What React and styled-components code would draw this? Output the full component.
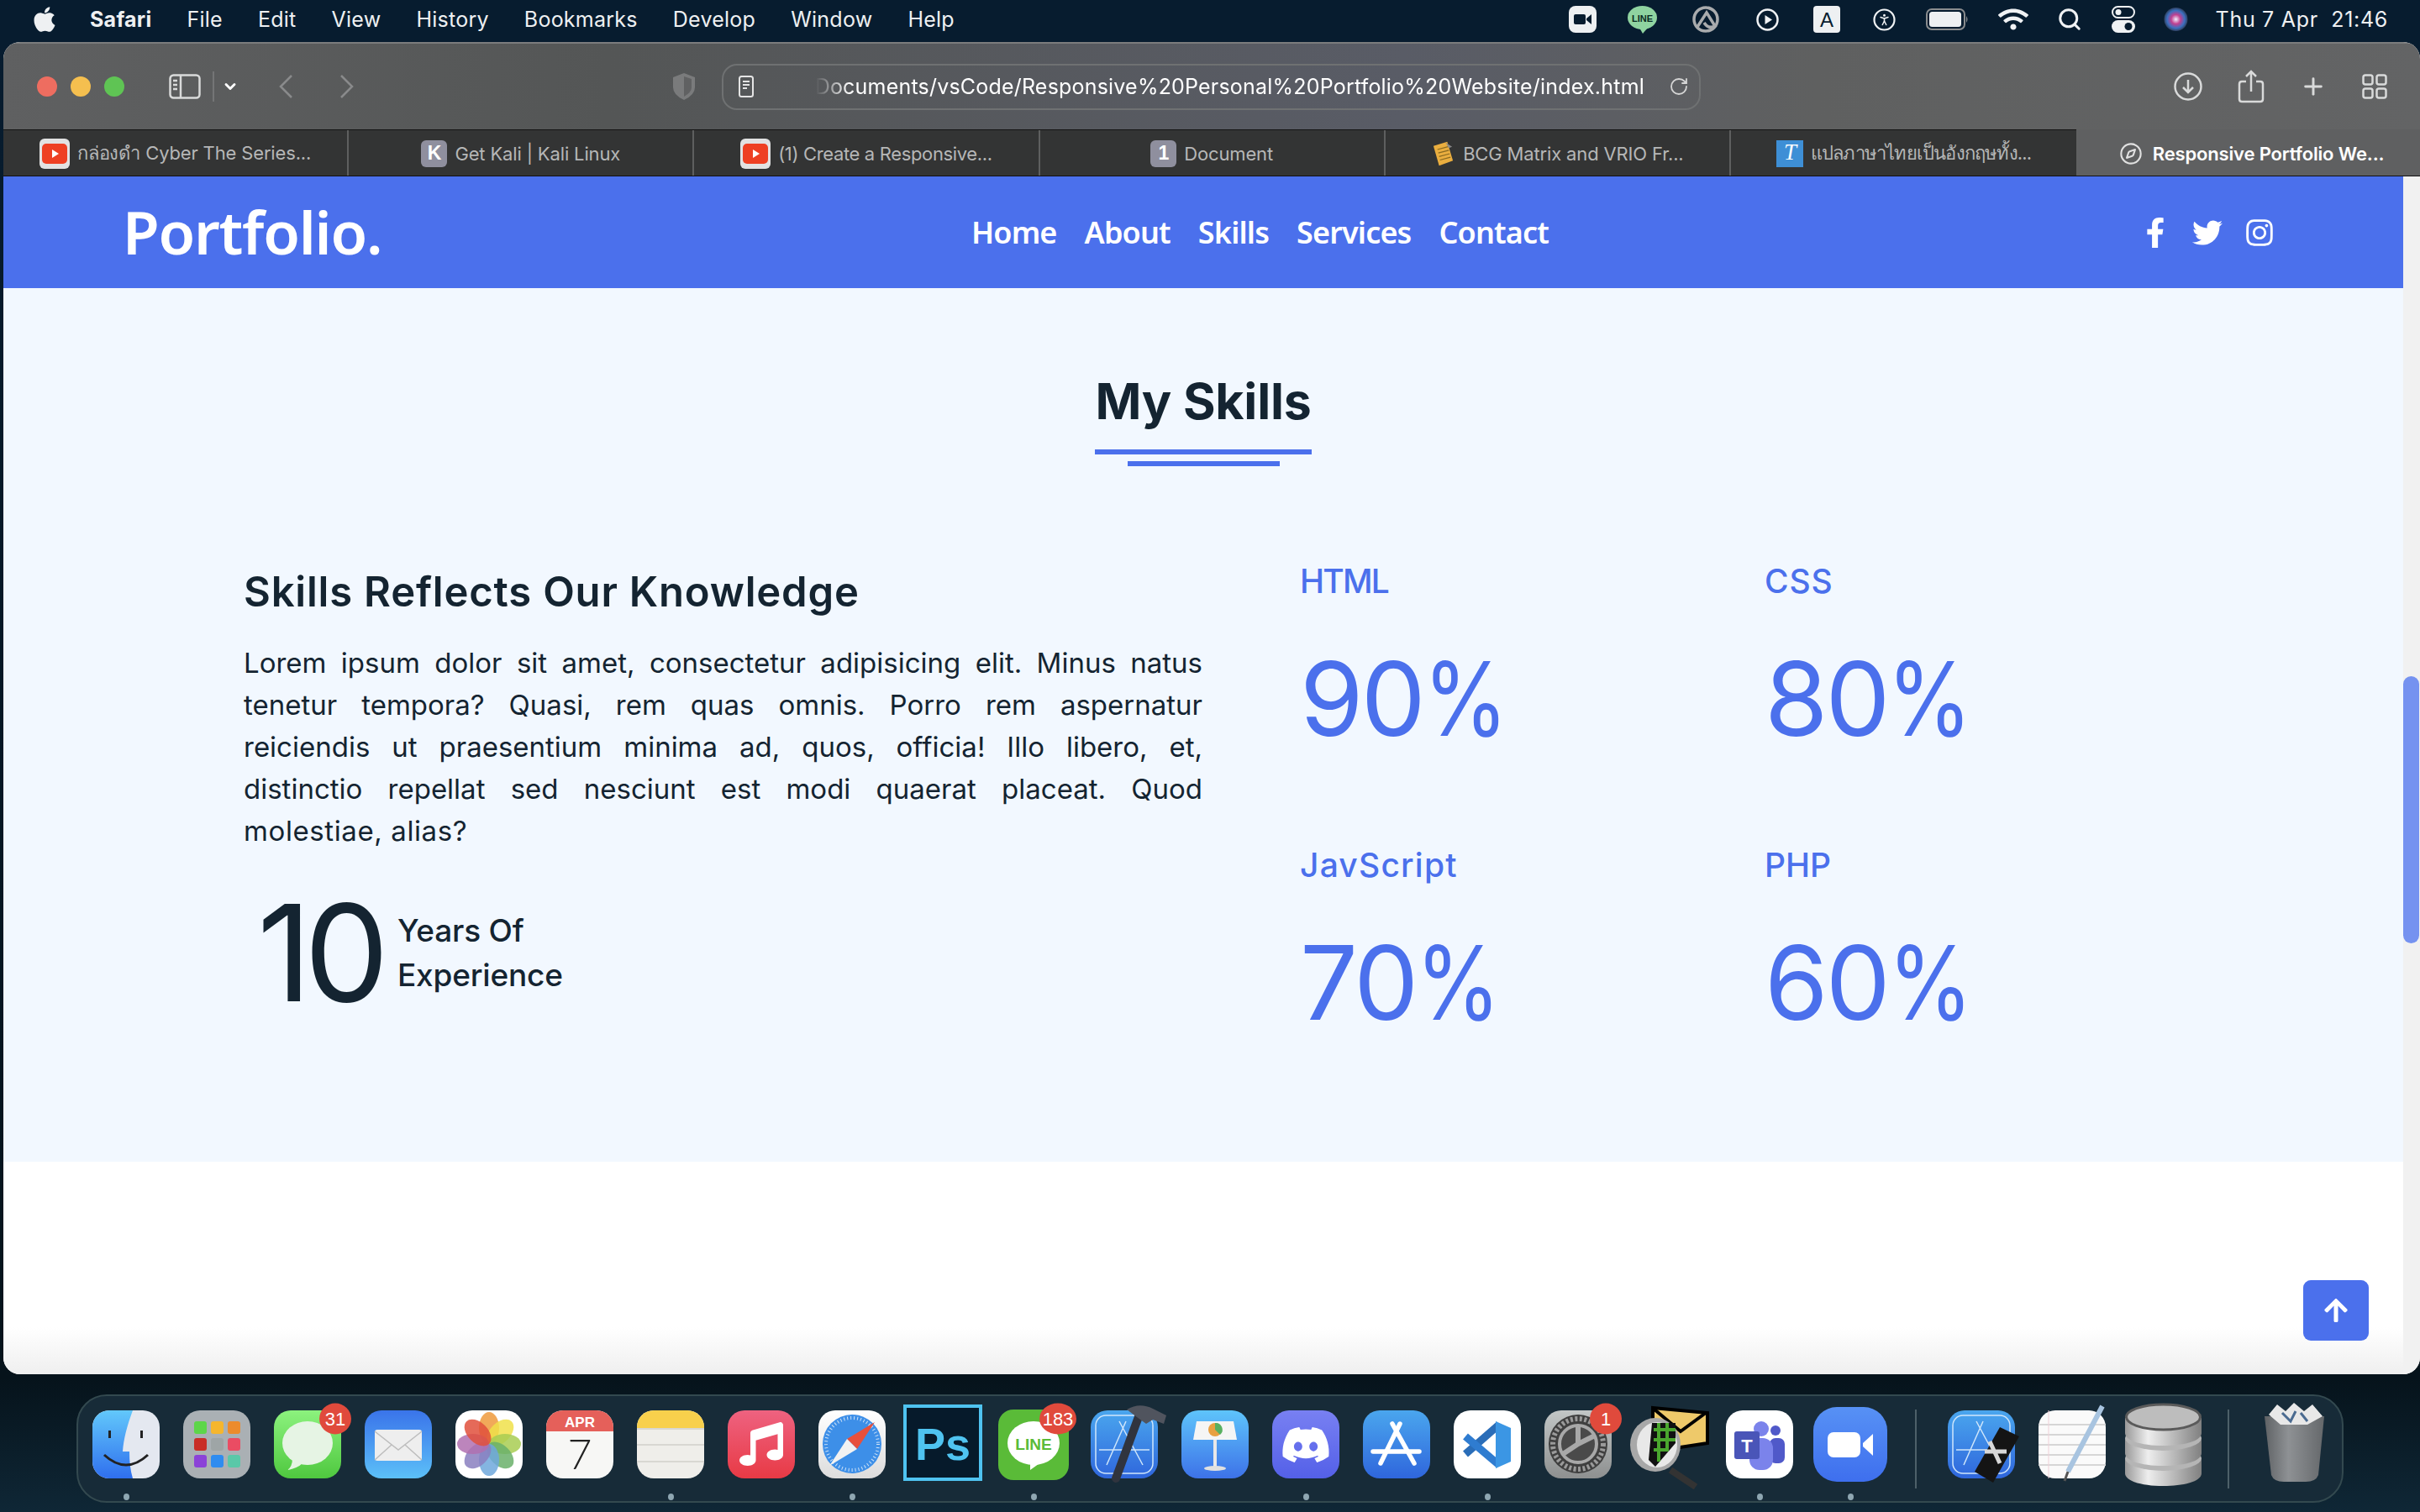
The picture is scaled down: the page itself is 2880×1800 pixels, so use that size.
import React from "react";
import styled, { createGlobalStyle } from "styled-components";
import { FaApple, FaFacebookF, FaTwitter, FaInstagram, FaWifi, FaMusic, FaDiscord, FaArrowUp } from "react-icons/fa";
import { Search, PersonStanding, RotateCw, ChevronDown, Plus, Compass } from "lucide-react";

const Global = createGlobalStyle`
  html, body { margin: 0; padding: 0; }
  body { width: 2880px; height: 1800px; overflow: hidden; background: #0c2230; font-family: "Inter", "Liberation Sans", sans-serif; }
`;

const BLUE = "#4b70ec";
const INK = "#142431";
const SANS = `"Inter", "Liberation Sans", sans-serif`;
const UI = `"Inter", "Liberation Sans", "Noto Sans", "DejaVu Sans", sans-serif`;
const UB = `"Noto Sans", "Open Sans", sans-serif`;

const Desktop = styled.div`
  width: 2880px; height: 1800px; display: flex; flex-direction: column;
  background: linear-gradient(180deg, #071c2f 0, #071c2f 50px, #06131b 1640px, #0f2736 1800px);
`;
const MenuBar = styled.div`
  height: 50px; display: flex; align-items: center; justify-content: space-between;
  padding: 0 38px 4px 36px; color: #eef0f2; font: 400 25px ${UI}; box-sizing: border-box;
`;
const MenuLeft = styled.div`display: flex; align-items: center; gap: 42px;`;
const Apple = styled(FaApple)`margin-right: -5px;`;
const MenuItem = styled.span`font-weight: ${p => (p.$bold ? 700 : 400)}; letter-spacing: 0.25px;`;
const StatusRow = styled.div`display: flex; align-items: center;`;
const Slot = styled.span`width: ${p => p.$w}px; display: flex; justify-content: center; align-items: center; color: #f0f2f4;`;
const Clock = styled.span`margin-left: 17px; white-space: pre; letter-spacing: 0.7px;`;

const Win = styled.div`
  position: relative; margin-left: 4px; height: 1586px; border-radius: 20px; overflow: hidden;
  display: flex; flex-direction: column; background: #fff;
`;
const Toolbar = styled.div`
  height: 104px; flex: none; display: flex; align-items: center; box-sizing: border-box;
  border-top: 2px solid #7b7c7d; position: relative;
  background: linear-gradient(90deg, #5f6061 0%, #545656 25%, #595c66 58%, #5f6060 75%, #636465 100%);
`;
const Lights = styled.div`display: flex; gap: 16px; margin-left: 40px;`;
const Light = styled.span`width: 24px; height: 24px; border-radius: 50%; background: ${p => p.$c};`;
const Tool = styled.span`
  display: flex; align-items: center; justify-content: center; margin-left: ${p => p.$ml}px;
  color: ${p => p.$c || "#d9dada"};
`;
const Address = styled.div`
  margin-left: ${p => p.$ml}px; width: 1165px; height: 55px; box-sizing: border-box; border: 2px solid #6f7172; border-radius: 18px;
  display: flex; align-items: center; padding: 0 12px 0 18px; color: #fff;
`;
const Url = styled.div`
  width: 986px; margin-left: 74px; font: 400 25px ${UI}; white-space: nowrap; overflow: hidden; direction: rtl; letter-spacing: 0.2px;
  -webkit-mask-image: linear-gradient(90deg, transparent 0, #000 40px);
  mask-image: linear-gradient(90deg, transparent 0, #000 40px);
`;
const TabBar = styled.div`
  height: 57px; flex: none; display: flex; background: #333434; border-top: 2px solid #141414;
  border-bottom: 1px solid #111; box-sizing: border-box; margin-top: -1px;
`;
const Tab = styled.div`
  width: 411.2px; flex: none; display: flex; align-items: center; justify-content: center; gap: 9px; box-sizing: border-box;
  border-right: 2px solid #5e5f5f; color: #b6b7b7; font: 400 22px ${UI}; white-space: nowrap; letter-spacing: ${p => p.$ls ?? -0.15}px;
  padding-top: 1px;
  &:nth-child(6) { border-right: 0; }
`;
const ActiveTab = styled(Tab)`
  flex: 1; background: #5f6061; color: #fff; font-weight: 600; border-right: 0; margin-top: -3px; padding-top: 4px; gap: 12px; padding-left: 8px;
`;
const Fav = styled.span`
  width: 31px; height: 32px; border-radius: 6px; background: ${p => p.$bg}; color: #fff; font: 700 23px "Liberation Sans", sans-serif;
  display: flex; align-items: center; justify-content: center; flex: none;
`;
const Page = styled.div`flex: 1; display: flex; min-height: 0;`;
const Main = styled.div`flex: 1; display: flex; flex-direction: column; min-width: 0;`;
const Nav = styled.nav`
  height: 133px; flex: none; background: ${BLUE}; display: flex; align-items: center; justify-content: space-between;
  padding: 0 153px 2px 142px; box-sizing: border-box; color: #fff;
`;
const Logo = styled.a`font: 600 71px ${UB}; letter-spacing: -1.25px; width: 303px; white-space: nowrap;`;
const NavLinks = styled.div`display: flex; gap: 33px; margin-left: 3px; padding-top: 2px;`;
const NavLink = styled.a`font: 600 36px ${UB}; letter-spacing: -0.85px;`;
const Social = styled.div`display: flex; align-items: center; gap: 26px; font-size: 36px; padding-top: 2px;`;
const Skills = styled.section`
  flex: none; background: #f2f8ff; display: flex; flex-direction: column; align-items: center; padding: 105px 0 152px; color: ${INK};
`;
const Title = styled.h2`
  margin: 0; width: 258px; text-align: center; font: 700 59px/1 ${SANS}; white-space: nowrap; letter-spacing: -0.2px;
`;
const Rule = styled.span`display: block; height: 6px; background: ${BLUE}; width: ${p => p.$w}px; margin-top: ${p => p.$mt}px;`;
const Columns = styled.div`
  width: 100%; box-sizing: border-box; margin-top: 117px; padding-left: 286px; display: grid; grid-template-columns: 1141px 1fr; column-gap: 116px;
`;
const Left = styled.div`padding-top: 8px;`;
const Sub = styled.h3`margin: 0; font: 600 49px/1 ${SANS}; letter-spacing: 0.8px; white-space: nowrap;`;
const Para = styled.p`margin: 35px 0 0; font: 400 33px/50px ${SANS}; color: ${INK};`;
const PLine = styled.span`
  display: block; text-align: justify; text-align-last: ${p => (p.$last ? "left" : "justify")};
  letter-spacing: ${p => (p.$last ? "0.6px" : "0")};
`;
const Exp = styled.div`display: flex; align-items: center; margin: 40px 0 0 16px;`;
const Ten = styled.span`font: 400 160px/1 ${SANS}; letter-spacing: -9px; width: 167px;`;
const ExpText = styled.span`font: 500 37px/53px ${SANS}; letter-spacing: -0.2px;`;
const Stats = styled.div`display: grid; grid-template-columns: 553px 553px; row-gap: 117px; color: ${BLUE};`;
const Stat = styled.div`display: flex; flex-direction: column; align-items: flex-start;`;
const StatName = styled.span`font: 500 39px/1 ${SANS}; letter-spacing: ${p => p.$ls}px;`;
const StatVal = styled.span`font: 400 122px/1 ${SANS}; margin-top: 60px; letter-spacing: -3px; white-space: nowrap;`;
const Pct = styled.span`display: inline-block; transform: scaleX(0.84); transform-origin: left center;`;
const Rest = styled.div`flex: 1; background: linear-gradient(180deg, #fff 0, #fff calc(100% - 56px), #efefef 100%);`;
const Scroll = styled.div`
  width: 20px; flex: none; background: #f1f1f1; padding-top: 595px; box-sizing: border-box;
`;
const Thumb = styled.div`width: 19px; height: 318px; border-radius: 10px; background: #7592f0;`;
const UpBtn = styled.a`
  position: absolute; right: 61px; bottom: 40px; width: 78px; height: 72px; border-radius: 9px; background: ${BLUE}; color: #fff;
  display: flex; align-items: center; justify-content: center; font-size: 32px;
`;
const Dock = styled.div`
  margin: 24px 0 0 91px; width: 2698px; height: 129px; box-sizing: border-box; border: 2px solid #33494f; border-radius: 36px;
  background: #172b38; display: flex; padding: 6px 0 0 3px;
`;
const Cell = styled.div`width: 108px; flex: none; display: flex; flex-direction: column; align-items: center;`;
const DockSvg = styled.svg`width: 108px; height: 104px; flex: none; overflow: visible; display: block;`;
const Dot = styled.span`width: 7px; height: 8px; margin-top: 6px; border-radius: 50%; background: ${p => (p.$on ? "#8fa7b2" : "transparent")};`;
const Sep = styled.div`width: 48px; flex: none; display: flex; justify-content: center; padding-top: 10px; &::after { content: ""; width: 2px; height: 94px; background: #4d6069; }`;

const Sq = ({ fill }) => <rect x="14" y="11" width="80" height="81" rx="20" fill={fill} />;
const Grad = ({ id, a, b }) => (
  <defs><linearGradient id={id} x1="0" y1="0" x2="0" y2="1"><stop offset="0" stopColor={a} /><stop offset="1" stopColor={b} /></linearGradient></defs>
);
const Badge = ({ x, rx, t }) => (
  <g>
    <ellipse cx={x} cy="21" rx={rx} ry="18.5" fill="#e04a3c" />
    <text x={x} y="29" textAnchor="middle" fill="#fff" fontFamily="Liberation Sans, sans-serif" fontSize="22">{t}</text>
  </g>
);
const AppGlyph = () => (
  <g fill="none" stroke="#fff" strokeWidth="5.5" strokeLinecap="round">
    <path d="M58 27 L35 74" /><path d="M49 27 L75 74" /><path d="M26 60 H81" />
  </g>
);

const icons = {
  finder: (
    <>
      <Grad id="fd" a="#62c8fb" b="#2f6fee" />
      <Sq fill="#e4e8f0" />
      <path d="M34 11 H62 C55 30 51 45 50 60 H58 C58 72 59 82 62 92 H34 A20 20 0 0 1 14 72 V31 A20 20 0 0 1 34 11Z" fill="url(#fd)" />
      <rect x="33" y="35" width="3" height="9" fill="#222" /><rect x="71" y="35" width="3" height="9" fill="#222" />
      <path d="M28 64 Q54 88 80 64" stroke="#222" strokeWidth="3" fill="none" />
    </>
  ),
  launch: (
    <>
      <Sq fill="#aab0b4" />
      {["#5dd649", "#f5b62e", "#ec8b2c", "#c92d26", "#9ea5a6", "#ea4c63", "#8b42d8", "#2f8cf0", "#5ac8a8"].map((c, i) => (
        <rect key={c} x={27 + (i % 3) * 20} y={24 + Math.floor(i / 3) * 20} width="15" height="15" rx="3" fill={c} />
      ))}
    </>
  ),
  msg: (
    <>
      <Grad id="mg" a="#8cf27e" b="#4fc83f" />
      <Sq fill="url(#mg)" />
      <ellipse cx="54" cy="50" rx="30" ry="26" fill="#e6f4e4" />
      <path d="M36 68 Q36 78 30 82 Q42 80 48 74Z" fill="#e6f4e4" />
      <Badge x={87} rx={19} t="31" />
    </>
  ),
  mail: (
    <>
      <Grad id="ml" a="#3a74ea" b="#5cc0f8" />
      <Sq fill="url(#ml)" />
      <rect x="26" y="34" width="56" height="37" rx="3" fill="#eeeeee" />
      <path d="M26 36 L54 58 L82 36 M26 70 L46 52 M82 70 L62 52" stroke="#bdbdbd" strokeWidth="1.5" fill="none" />
    </>
  ),
  photos: (
    <>
      <Sq fill="#fff" />
      {["#ef9a3c", "#f0e04a", "#a8cc52", "#6ab06a", "#6fa8dc", "#8a7fc0", "#b070b0", "#e0503c"].map((c, i) => (
        <ellipse key={c} cx="54" cy="32" rx="12" ry="19" fill={c} opacity="0.85" transform={`rotate(${i * 45} 54 51)`} />
      ))}
    </>
  ),
  cal: (
    <>
      <Sq fill="#f7f7f5" />
      <path d="M34 11 H74 A20 20 0 0 1 94 31 V36 H14 V31 A20 20 0 0 1 34 11Z" fill="#e5605a" />
      <text x="54" y="31" textAnchor="middle" fill="#fff" fontFamily="Liberation Sans, sans-serif" fontWeight="700" fontSize="17">APR</text>
      <text x="54" y="81" textAnchor="middle" fill="#222" fontFamily="Lato, sans-serif" fontWeight="300" fontSize="50">7</text>
    </>
  ),
  notes: (
    <>
      <Sq fill="#efeeea" />
      <path d="M34 11 H74 A20 20 0 0 1 94 31 V32 H14 V31 A20 20 0 0 1 34 11Z" fill="#f8d04c" />
      <path d="M14 33 H94 M14 52 H94 M14 72 H94" stroke="#d8d7d2" strokeWidth="2" />
    </>
  ),
  music: (
    <>
      <Grad id="mu" a="#ee6280" b="#e83a45" />
      <Sq fill="url(#mu)" />
      <FaMusic x="28" y="25" size="52" color="#fff" />
    </>
  ),
  safari: (
    <>
      <Grad id="sf" a="#fff" b="#dcdcdc" />
      <Sq fill="url(#sf)" />
      <circle cx="54" cy="51" r="35" fill="#3d8fe8" />
      <circle cx="54" cy="51" r="31" fill="none" stroke="#cfe3f7" strokeWidth="4" strokeDasharray="1 3" />
      <path d="M81 25 L60 57 L48 45Z" fill="#e8503c" />
      <path d="M27 77 L48 45 L60 57Z" fill="#f2f2f2" />
    </>
  ),
  ps: (
    <>
      <rect x="9" y="6" width="90" height="87" fill="#061a2b" stroke="#4fc3f0" strokeWidth="4" />
      <text x="54" y="70" textAnchor="middle" fill="#4fc3f0" fontFamily="Liberation Sans, sans-serif" fontWeight="700" fontSize="54">Ps</text>
    </>
  ),
  line: (
    <>
      <rect x="12" y="10" width="84" height="84" rx="18" fill="#5abb38" />
      <ellipse cx="54" cy="50" rx="31" ry="26" fill="#fff" />
      <path d="M50 72 L50 82 L64 72Z" fill="#fff" />
      <text x="54" y="58" textAnchor="middle" fill="#5abb38" fontFamily="Liberation Sans, sans-serif" fontWeight="700" fontSize="19">LINE</text>
      <Badge x={83} rx={22} t="183" />
    </>
  ),
  xcode: (
    <>
      <Grad id="xc" a="#4aa6ee" b="#2f66dc" />
      <Sq fill="url(#xc)" />
      <rect x="20" y="17" width="68" height="69" rx="12" fill="none" stroke="#cfe6fb" strokeWidth="1.5" />
      <g fill="none" stroke="#cfe6fb" strokeWidth="1.5"><path d="M56 24 L33 76 M48 24 L76 76 M24 58 H84" /></g>
      <path d="M72 16 L44 92" stroke="#30343e" strokeWidth="10" strokeLinecap="round" />
      <path d="M57 10 Q72 1 88 9 L104 17 L101 27 L88 22 L80 27 L69 19Z" fill="#50545e" />
    </>
  ),
  keynote: (
    <>
      <Grad id="kn" a="#5ec4fb" b="#3d72e8" />
      <Sq fill="url(#kn)" />
      <path d="M32 24 H76 L80 46 H28Z" fill="#f5f5f5" />
      <circle cx="54" cy="34" r="8" fill="#e8a040" /><path d="M54 26 A8 8 0 0 1 60 40 L54 34Z" fill="#58b060" />
      <rect x="52" y="46" width="4" height="32" fill="#e8e8e8" />
      <ellipse cx="54" cy="80" rx="13" ry="3" fill="#e0e0e0" />
    </>
  ),
  discord: (
    <>
      <Grad id="dc" a="#7880f2" b="#5460e8" />
      <Sq fill="url(#dc)" />
      <FaDiscord x="24" y="22" size="60" color="#fff" />
    </>
  ),
  store: (
    <>
      <Grad id="as" a="#4aa6ee" b="#2f66dc" />
      <Sq fill="url(#as)" />
      <AppGlyph />
    </>
  ),
  vscode: (
    <>
      <Sq fill="#fff" />
      <path d="M68 28 L28 63" stroke="#2a6db8" strokeWidth="9" />
      <path d="M28 42 L68 76" stroke="#2f7cd0" strokeWidth="9" />
      <path d="M64 24 L82 32 V72 L64 80Z" fill="#3b96e4" />
    </>
  ),
  prefs: (
    <>
      <Grad id="pr" a="#c2c6c6" b="#8e9090" />
      <Sq fill="url(#pr)" />
      <circle cx="54" cy="51" r="35" fill="#3f3f3f" />
      <circle cx="54" cy="51" r="30" fill="none" stroke="#9a9a9a" strokeWidth="6" strokeDasharray="3 2.5" />
      <circle cx="54" cy="51" r="22" fill="#4a4a4a" stroke="#a8a8a8" strokeWidth="4" />
      <path d="M54 51 L74 41 M54 51 L54 29 M54 51 L36 63" stroke="#a8a8a8" strokeWidth="6" />
      <Badge x={87} rx={19} t="1" />
    </>
  ),
  spot: (
    <>
      <path d="M35 8 L100 14 V50 L35 60Z" fill="#eec96a" stroke="#000" strokeWidth="4" />
      <path d="M37 10 L68 36 L98 14" fill="none" stroke="#000" strokeWidth="4" />
      <path d="M56 82 L86 102" stroke="#333" strokeWidth="8" />
      <ellipse cx="38" cy="52" rx="30" ry="32" fill="#a8a8a8" />
      <ellipse cx="40" cy="52" rx="24" ry="27" fill="#e8e8e8" />
      <path d="M34 26 H62 V50 L38 78 L30 70Z" fill="#111" />
      <path d="M36 34 H62 M36 46 H62 M36 58 H50 M42 26 V72 M52 26 V60" stroke="#4aa62e" strokeWidth="4" />
    </>
  ),
  teams: (
    <>
      <Sq fill="#fff" />
      <circle cx="73" cy="35" r="6" fill="#5059c9" />
      <rect x="66" y="44" width="18" height="30" rx="7" fill="#5059c9" />
      <circle cx="56" cy="33" r="9" fill="#7b83eb" />
      <rect x="42" y="44" width="28" height="38" rx="12" fill="#7b83eb" />
      <rect x="24" y="36" width="30" height="33" rx="3" fill="#4a55b8" />
      <text x="39" y="61" textAnchor="middle" fill="#fff" fontFamily="Liberation Sans, sans-serif" fontWeight="700" fontSize="22">T</text>
    </>
  ),
  zoom: (
    <>
      <Grad id="zm" a="#5791f5" b="#3e6fee" />
      <rect x="10" y="7" width="88" height="89" rx="28" fill="url(#zm)" />
      <rect x="27" y="37" width="39" height="30" rx="7" fill="#fff" />
      <path d="M69 50 L81 39 V65 L69 54Z" fill="#fff" />
    </>
  ),
  sim: (
    <>
      <Grad id="si" a="#4aa6ee" b="#2f66dc" />
      <Sq fill="url(#si)" />
      <rect x="20" y="17" width="68" height="69" rx="12" fill="none" stroke="#cfe6fb" strokeWidth="1.5" />
      <g fill="none" stroke="#cfe6fb" strokeWidth="1.5"><path d="M56 24 L33 76 M48 24 L76 76 M24 58 H84" /></g>
      <path d="M76 31 L99 42 L68 97 L46 84Z" fill="#141414" />
      <path d="M64 48 L76 74 M58 60 H84" stroke="#d8d8d8" strokeWidth="5" />
    </>
  ),
  edit: (
    <>
      <Sq fill="#fafafa" />
      <path d="M14 28 H94 M14 40 H94 M14 52 H94 M14 64 H94 M14 76 H94" stroke="#d6d6d6" strokeWidth="2" />
      <path d="M26 11 V92" stroke="#f0d0d8" strokeWidth="1" />
      <path d="M90 6 L49 84" stroke="#a8c4e0" strokeWidth="6" />
      <path d="M49 84 L45 95" stroke="#555" strokeWidth="3" />
    </>
  ),
  db: (
    <>
      <defs><linearGradient id="dbh" x1="0" y1="0" x2="1" y2="0"><stop offset="0" stopColor="#999" /><stop offset=".3" stopColor="#eee" /><stop offset="1" stopColor="#808080" /></linearGradient></defs>
      <path d="M9 68 V86 C9 106 100 106 100 86 V68Z" fill="url(#dbh)" />
      <ellipse cx="54.5" cy="68" rx="45.5" ry="15" fill="#b5b5b5" />
      <path d="M9 44 V62 C9 82 100 82 100 62 V44Z" fill="url(#dbh)" />
      <ellipse cx="54.5" cy="44" rx="45.5" ry="15" fill="#b5b5b5" />
      <path d="M9 20 V38 C9 58 100 58 100 38 V20Z" fill="url(#dbh)" />
      <ellipse cx="54.5" cy="19" rx="44" ry="15" fill="#bdbdbd" stroke="#5a5a5a" strokeWidth="3" />
    </>
  ),
  trash: (
    <>
      <defs><linearGradient id="tr" x1="0" y1="0" x2="1" y2="0"><stop offset="0" stopColor="#5f6265" /><stop offset=".4" stopColor="#8e9194" /><stop offset="1" stopColor="#65686b" /></linearGradient></defs>
      <path d="M19 18 H90 L83 88 Q80 96 68 96 H42 Q30 96 27 88Z" fill="url(#tr)" />
      <path d="M24 16 L34 4 L44 12 L54 2 L66 12 L76 4 L88 18 L70 28 H38Z" fill="#e8e8e8" />
      <path d="M40 14 L50 24 L56 12 M62 14 L70 24" stroke="#4a6a90" strokeWidth="3" fill="none" />
    </>
  ),
};

const dock1 = [
  ["finder", 1], ["launch"], ["msg"], ["mail"], ["photos"], ["cal"], ["notes", 1], ["music"], ["safari", 1], ["ps"], ["line", 1],
  ["xcode"], ["keynote"], ["discord", 1], ["store"], ["vscode", 1], ["prefs"], ["spot"], ["teams", 1], ["zoom", 1],
];
const dock2 = [["sim"], ["edit"], ["db"]];
const stats = [
  { name: "HTML", ls: -1.8, val: "90" },
  { name: "CSS", ls: 0.8, val: "80" },
  { name: "JavScript", ls: 1.2, val: "70" },
  { name: "PHP", ls: 0, val: "60" },
];

const DockIcon = ({ name, on }) => (
  <Cell>
    <DockSvg viewBox="0 0 108 104">{icons[name]}</DockSvg>
    <Dot $on={on} />
  </Cell>
);

const YouTube = () => (
  <svg width="36" height="36" viewBox="0 0 36 36">
    <rect width="36" height="36" rx="6" fill="#e2e2e2" />
    <rect x="3" y="6" width="30" height="24" rx="5" fill="#ee4023" />
    <path d="M15 13 L23 18 L15 23Z" fill="#fff" />
  </svg>
);
const DocFav = () => (
  <svg width="29" height="30" viewBox="0 0 30 36" preserveAspectRatio="none">
    <path d="M3 7 L20 1 L27 28 L10 35Z" fill="#eaae3f" />
    <path d="M8 12 L21 8 M9 17 L22 13 M10 22 L23 18 M11 27 L24 23" stroke="#8a6a20" strokeWidth="1.5" />
    <path d="M18 2 L26 8 L22 10Z" fill="#888" />
  </svg>
);
const TFav = () => (
  <svg width="32" height="32" viewBox="0 0 32 32">
    <rect width="32" height="32" fill="#3e8fd6" />
    <text x="16" y="23" textAnchor="middle" fill="#fff" fontFamily="Liberation Serif, serif" fontStyle="italic" fontSize="27">T</text>
  </svg>
);

export default function App() {
  return (
    <Desktop>
      <Global />
      <MenuBar>
        <MenuLeft>
          <Apple size={34} />
          <MenuItem $bold>Safari</MenuItem>
          {["File", "Edit", "View", "History", "Bookmarks", "Develop", "Window", "Help"].map(m => <MenuItem key={m}>{m}</MenuItem>)}
        </MenuLeft>
        <StatusRow>
          <Slot $w={71}><svg width="33" height="32" viewBox="0 0 33 32"><rect width="33" height="32" rx="8" fill="#eef0f2" /><rect x="6" y="10" width="14" height="12" rx="2" fill="#071c2f" /><path d="M21 15 L27 10 V22 L21 17Z" fill="#071c2f" /></svg></Slot>
          <Slot $w={72}><svg width="35" height="33" viewBox="0 0 35 33"><ellipse cx="17.5" cy="14" rx="17.5" ry="14" fill="#8fd3a0" /><path d="M14 26 L18 33 L24 26Z" fill="#8fd3a0" /><text x="17.5" y="19" textAnchor="middle" fontSize="11" fontWeight="700" fontFamily="Liberation Sans, sans-serif" fill="#0a2a22">LINE</text></svg></Slot>
          <Slot $w={78}><svg width="38" height="32" viewBox="0 0 38 32" fill="none" stroke="#a9abad" strokeWidth="3.5"><circle cx="19" cy="16" r="14" /><path d="M9 25 L20 8 L30 24 Q22 28 17 20" /></svg></Slot>
          <Slot $w={69}><svg width="27" height="27" viewBox="0 0 27 27"><circle cx="13.5" cy="13.5" r="12" fill="none" stroke="#f0f2f4" strokeWidth="2.5" /><path d="M10.5 8 L19 13.5 L10.5 19Z" fill="#f0f2f4" /></svg></Slot>
          <Slot $w={72}><svg width="32" height="32" viewBox="0 0 32 32"><rect width="32" height="32" rx="4" fill="#eef0f2" /><text x="16" y="25" textAnchor="middle" fontSize="24" fontFamily="Liberation Sans, sans-serif" fill="#071c2f">A</text></svg></Slot>
          <Slot $w={65}><svg width="27" height="27" viewBox="0 0 27 27"><circle cx="13.5" cy="13.5" r="12" fill="none" stroke="#f0f2f4" strokeWidth="2.2" /><PersonStanding x="4.5" y="4.5" size={18} color="#f0f2f4" /></svg></Slot>
          <Slot $w={85}><svg width="51" height="26" viewBox="0 0 51 26"><rect x="1" y="1" width="45" height="24" rx="6" fill="none" stroke="#8a8c8e" strokeWidth="2" /><rect x="4" y="4" width="38" height="18" rx="3.5" fill="#eef0f2" /><path d="M48 9 Q51 13 48 17Z" fill="#8a8c8e" /></svg></Slot>
          <Slot $w={72}><FaWifi size={36} /></Slot>
          <Slot $w={63}><Search size={30} strokeWidth={2.4} /></Slot>
          <Slot $w={65}><svg width="28" height="32" viewBox="0 0 28 32"><rect x="1" y="1" width="26" height="13" rx="6.5" fill="none" stroke="#f0f2f4" strokeWidth="2" /><circle cx="8" cy="7.5" r="3.5" fill="#f0f2f4" /><rect y="17" width="28" height="15" rx="7.5" fill="#f0f2f4" /><circle cx="20" cy="24.5" r="4.5" fill="#071c2f" /></svg></Slot>
          <Slot $w={60}><svg width="29" height="30" viewBox="0 0 29 30"><defs><radialGradient id="sr"><stop offset="0" stopColor="#f0f0ff" /><stop offset=".4" stopColor="#c04090" /><stop offset=".75" stopColor="#3a70c0" /><stop offset="1" stopColor="#304060" /></radialGradient></defs><circle cx="14.5" cy="15" r="14" fill="url(#sr)" /></svg></Slot>
          <Clock>{"Thu 7 Apr  21:46"}</Clock>
        </StatusRow>
      </MenuBar>

      <Win>
        <Toolbar>
          <Lights>
            <Light $c="#ee6d60" /><Light $c="#f5bf4f" /><Light $c="#5fc454" />
          </Lights>
          <Tool $ml={53}>
            <svg width="38" height="30" viewBox="0 0 38 30" fill="none" stroke="#d9dada" strokeWidth="2.5"><rect x="1.5" y="1.5" width="35" height="27" rx="4" /><path d="M14 2 V28" /><path d="M5 8 H10 M5 13 H10 M5 18 H10" /></svg>
          </Tool>
          <Tool $ml={14} $c="#fff"><svg width="2" height="36"><rect width="2" height="36" fill="#747576" /></svg></Tool>
          <Tool $ml={9}><ChevronDown size={20} strokeWidth={3.5} color="#fff" /></Tool>
          <Tool $ml={47}><svg width="18" height="30" viewBox="0 0 18 30" fill="none" stroke="#898a8b" strokeWidth="2.5"><path d="M16 2 L3 15 L16 28" /></svg></Tool>
          <Tool $ml={55}><svg width="18" height="30" viewBox="0 0 18 30" fill="none" stroke="#898a8b" strokeWidth="2.5"><path d="M2 2 L15 15 L2 28" /></svg></Tool>
          <Tool $ml={378}><svg width="28" height="34" viewBox="0 0 28 34"><path d="M14 1 L27 6 V18 Q27 27 14 33 Q1 27 1 18 V6Z" fill="#7a7b7c" /><path d="M14 5 L23 8 V18 Q23 24 14 29Z" fill="#606162" /></svg></Tool>
          <Address $ml={31}>
            <svg width="18" height="26" viewBox="0 0 18 26" fill="none" stroke="#e4e4e4" strokeWidth="2"><rect x="1" y="1" width="16" height="24" rx="2.5" /><path d="M5 7 H13 M5 11 H13 M5 15 H10" /></svg>
            <Url><bdi>Documents/vsCode/Responsive%20Personal%20Portfolio%20Website/index.html</bdi></Url>
            <Tool $ml={29} $c="#d5d5d5"><RotateCw size={24} strokeWidth={1.8} /></Tool>
          </Address>
          <Tool $ml={563}><svg width="34" height="34" viewBox="0 0 34 34" fill="none" stroke="#d9dada" strokeWidth="2.5"><circle cx="17" cy="17" r="15.5" /><path d="M17 9 V24 M11 18 L17 24 L23 18" /></svg></Tool>
          <Tool $ml={42}><svg width="32" height="40" viewBox="0 0 32 40" fill="none" stroke="#d9dada" strokeWidth="2.5"><path d="M10 14 H5 Q2 14 2 17 V35 Q2 38 5 38 H27 Q30 38 30 35 V17 Q30 14 27 14 H22" /><path d="M16 26 V3 M10 8 L16 2 L22 8" /></svg></Tool>
          <Tool $ml={42}><Plus size={32} strokeWidth={2.2} /></Tool>
          <Tool $ml={42}><svg width="30" height="30" viewBox="0 0 30 30" fill="none" stroke="#d9dada" strokeWidth="2.5"><rect x="1.5" y="1.5" width="11" height="11" rx="2.5" /><rect x="17.5" y="1.5" width="11" height="11" rx="2.5" /><rect x="1.5" y="17.5" width="11" height="11" rx="2.5" /><rect x="17.5" y="17.5" width="11" height="11" rx="2.5" /></svg></Tool>
        </Toolbar>
        <TabBar>
          <Tab><YouTube />กล่องดำ Cyber The Series...</Tab>
          <Tab><Fav $bg="#8f8f9e">K</Fav>Get Kali | Kali Linux</Tab>
          <Tab $ls={-0.35}><YouTube />(1) Create a Responsive...</Tab>
          <Tab><Fav $bg="#8f8f9e">1</Fav>Document</Tab>
          <Tab><DocFav />BCG Matrix and VRIO Fr...</Tab>
          <Tab $ls={-0.8}><TFav />แปลภาษาไทยเป็นอังกฤษทั้ง...</Tab>
          <ActiveTab><Compass size={28} strokeWidth={1.8} color="#e0e0e0" />Responsive Portfolio We...</ActiveTab>
        </TabBar>
        <Page>
          <Main>
            <Nav>
              <Logo>Portfolio.</Logo>
              <NavLinks>
                {["Home", "About", "Skills", "Services", "Contact"].map(l => <NavLink key={l}>{l}</NavLink>)}
              </NavLinks>
              <Social><FaFacebookF /><FaTwitter /><FaInstagram /></Social>
            </Nav>
            <Skills>
              <Title>My Skills</Title>
              <Rule $w={258} $mt={28} />
              <Rule $w={181} $mt={8} />
              <Columns>
                <Left>
                  <Sub>Skills Reflects Our Knowledge</Sub>
                  <Para>
                    <PLine>Lorem ipsum dolor sit amet, consectetur adipisicing elit. Minus natus</PLine>
                    <PLine>tenetur tempora? Quasi, rem quas omnis. Porro rem aspernatur</PLine>
                    <PLine>reiciendis ut praesentium minima ad, quos, officia! Illo libero, et,</PLine>
                    <PLine>distinctio repellat sed nesciunt est modi quaerat placeat. Quod</PLine>
                    <PLine $last>molestiae, alias?</PLine>
                  </Para>
                  <Exp>
                    <Ten>10</Ten>
                    <ExpText>Years Of<br />Experience</ExpText>
                  </Exp>
                </Left>
                <Stats>
                  {stats.map(s => (
                    <Stat key={s.name}>
                      <StatName $ls={s.ls}>{s.name}</StatName>
                      <StatVal>{s.val}<Pct>%</Pct></StatVal>
                    </Stat>
                  ))}
                </Stats>
              </Columns>
            </Skills>
            <Rest />
          </Main>
          <Scroll><Thumb /></Scroll>
        </Page>
        <UpBtn><FaArrowUp /></UpBtn>
      </Win>

      <Dock>
        {dock1.map(([n, on]) => <DockIcon key={n} name={n} on={on} />)}
        <Sep />
        {dock2.map(([n, on]) => <DockIcon key={n} name={n} on={on} />)}
        <Sep />
        <DockIcon name="trash" />
      </Dock>
    </Desktop>
  );
}
